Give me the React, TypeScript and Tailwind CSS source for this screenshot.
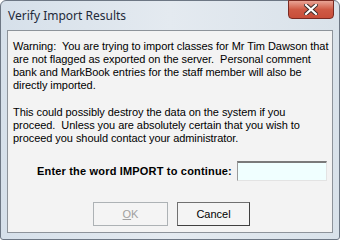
import React from 'react'

const FONT = { fontFamily: '"Liberation Sans", Arial, sans-serif' }

export default function App() {
  return (
    <div className="w-[340px] h-[240px] overflow-hidden bg-white">
      <div className="w-[340px] h-[240px] flex flex-col rounded-t-[6px] rounded-b-[3px] border border-[#6d7784] bg-gradient-to-r from-[#d6e0ea] via-[#e4eaf0] to-[#d9e2ea]">
        {/* title bar */}
        <div className="h-[29px] shrink-0 flex items-start justify-between pl-[7px] pr-[5px]">
          <span
            className="mt-[6px] text-[12px] text-[#1e2a3a]"
            style={{ fontFamily: '"Noto Sans", "Open Sans", sans-serif' }}
          >
            Verify Import Results
          </span>
          <div className="w-[46px] h-[19px] -mt-px rounded-b-[4px] border border-[#7a2a22] bg-gradient-to-b from-[#e8a395] via-[#cf5a45] to-[#c84e3a] flex items-center justify-center">
            <svg width="14" height="11" viewBox="0 0 14 11">
              <path d="M2 1 L12 10 M12 1 L2 10" stroke="#3a2a28" strokeWidth="4" strokeLinecap="square" />
              <path d="M2 1 L12 10 M12 1 L2 10" stroke="#ffffff" strokeWidth="2.2" strokeLinecap="square" />
            </svg>
          </div>
        </div>
        {/* client */}
        <div className="mx-[6px] h-[203px] shrink-0 border border-[#8d939a] bg-[#f3f3f3] flex flex-col" style={FONT}>
          <div className="pl-[5px] pt-[9px] text-[11px] leading-[13px] tracking-[-0.06px] text-black whitespace-pre">
            {'Warning:  You are trying to import classes for Mr Tim Dawson that\nare not flagged as exported on the server.  Personal comment\nbank and MarkBook entries for the staff member will also be\ndirectly imported.'}
          </div>
          <div className="pl-[5px] pt-[14px] text-[11px] leading-[13px] tracking-[-0.06px] text-black whitespace-pre">
            {'This could possibly destroy the data on the system if you\nproceed.  Unless you are absolutely certain that you wish to\nproceed you should contact your administrator.'}
          </div>
          <div className="mt-[16px] flex items-center pl-[29px] gap-[5px]">
            <span className="text-[11px] font-bold tracking-[0.18px] text-black whitespace-nowrap">Enter the word IMPORT to continue:</span>
            <div className="w-[90px] h-[20px] border-t-2 border-l border-r border-b border-t-[#7a7a7a] border-l-[#9a9a9a] border-r-[#e3e3e3] border-b-[#e3e3e3] bg-[#f0ffff]" />
          </div>
          <div className="mt-[21px] flex pl-[85px] gap-[9px]">
            <div className="w-[75px] h-[24px] border border-[#adb2b5] bg-[#f4f4f4] flex items-center justify-center text-[11px] text-[#a0a0a0]">
              <span className="underline">O</span>K
            </div>
            <div className="w-[73px] h-[24px] border border-[#707070] border-r-[#404040] border-b-[#404040] bg-[#f4f4f4] flex items-center justify-center text-[11px] text-black">
              Cancel
            </div>
          </div>
        </div>
      </div>
    </div>
  )
}
